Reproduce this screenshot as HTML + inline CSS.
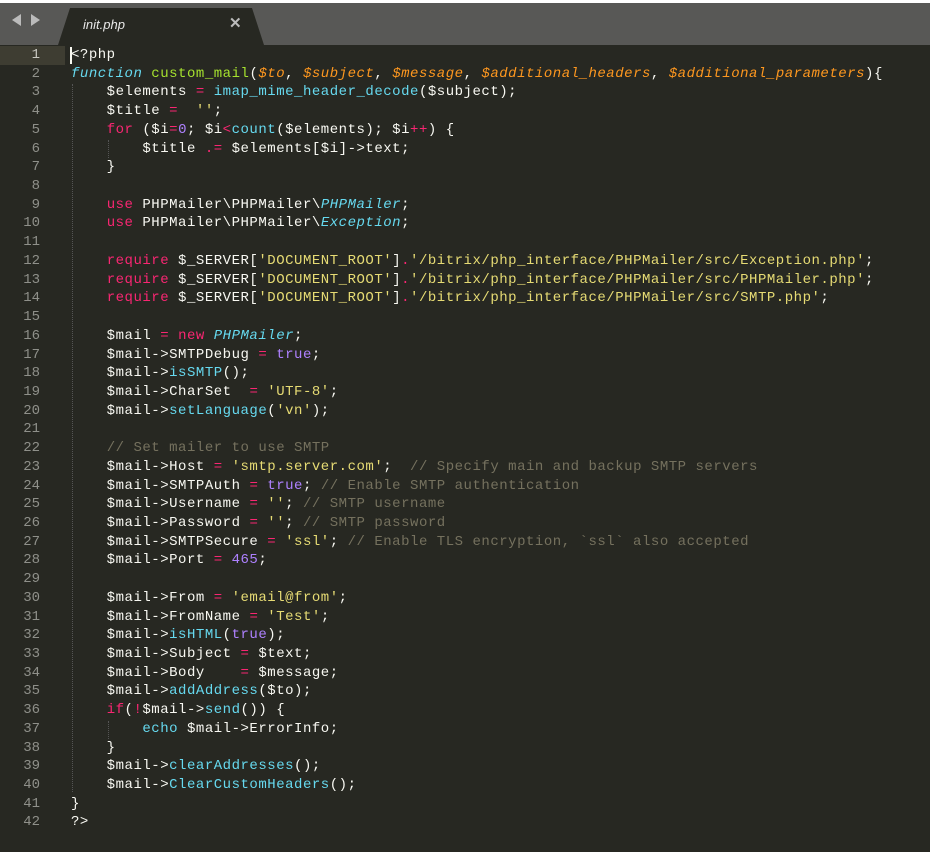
<!DOCTYPE html>
<html><head><meta charset="utf-8"><style>
html,body{margin:0;padding:0;width:930px;height:852px;overflow:hidden;background:#272822;}
.top{position:absolute;left:0;top:0;width:930px;height:3px;background:#fff;}
.bar{position:absolute;left:0;top:3px;width:930px;height:42px;background:#585856;}
.tab{position:absolute;left:58px;top:8px;width:206px;height:37px;background:#272822;clip-path:polygon(12px 0,194px 0,206px 37px,0 37px);}
.tabt{position:absolute;left:83px;top:17px;font:italic 13px "Liberation Sans",sans-serif;color:#e8e8e8;}
.x{position:absolute;left:229px;top:14px;font:bold 15px "Liberation Sans",sans-serif;color:#bbb;}
.arr{position:absolute;top:14px;width:0;height:0;border-top:6px solid transparent;border-bottom:6px solid transparent;}
.g{position:absolute;left:0;top:46px;width:64px;font:14px "Liberation Mono",monospace;color:#8f908a;text-align:right;}
.g div,.c div{height:18.73px;line-height:18.73px;}
.g div{padding-right:24px;}
.hl{position:absolute;left:0;top:46px;width:65px;height:19px;background:#3e3d32;}
.c{position:absolute;left:71px;top:46px;font:14px "Liberation Mono",monospace;letter-spacing:.52px;color:#f8f8f2;white-space:pre;}
.k{color:#f92672}.s{color:#66d9ef;font-style:italic}.b{color:#66d9ef}.f{color:#a6e22e}.p{color:#fd971f;font-style:italic}.y{color:#e6db74}.n{color:#ae81ff}.m{color:#75715e}
.cur{position:absolute;left:70px;top:47px;width:2px;height:17px;background:#f8f8f0;}
.ig{position:absolute;border-left:1px dotted #555;}
</style></head><body>
<div class="top"></div><div class="bar"></div>
<div class="arr" style="left:12px;border-right:9px solid #bbb"></div>
<div class="arr" style="left:31px;border-left:9px solid #bbb"></div>
<div class="tab"></div><div class="tabt">init.php</div><div class="x">✕</div>
<div class="hl"></div>
<div class="ig" style="left:72px;top:84px;height:708px"></div>
<div class="ig" style="left:108px;top:140px;height:18px"></div>
<div class="ig" style="left:108px;top:721px;height:18px"></div>
<div class="g"><div style="color:#c8c8c0">1</div><div>2</div><div>3</div><div>4</div><div>5</div><div>6</div><div>7</div><div>8</div><div>9</div><div>10</div><div>11</div><div>12</div><div>13</div><div>14</div><div>15</div><div>16</div><div>17</div><div>18</div><div>19</div><div>20</div><div>21</div><div>22</div><div>23</div><div>24</div><div>25</div><div>26</div><div>27</div><div>28</div><div>29</div><div>30</div><div>31</div><div>32</div><div>33</div><div>34</div><div>35</div><div>36</div><div>37</div><div>38</div><div>39</div><div>40</div><div>41</div><div>42</div></div>
<div class="c"><div>&lt;?php</div><div><span class="s">function</span> <span class="f">custom_mail</span>(<span class="p">$to</span>, <span class="p">$subject</span>, <span class="p">$message</span>, <span class="p">$additional_headers</span>, <span class="p">$additional_parameters</span>){</div><div>    $elements <span class="k">=</span> <span class="b">imap_mime_header_decode</span>($subject);</div><div>    $title <span class="k">=</span>  <span class="y">''</span>;</div><div>    <span class="k">for</span> ($i<span class="k">=</span><span class="n">0</span>; $i<span class="k">&lt;</span><span class="b">count</span>($elements); $i<span class="k">++</span>) {</div><div>        $title <span class="k">.=</span> $elements[$i]-&gt;text;</div><div>    }</div><div> </div><div>    <span class="k">use</span> PHPMailer\PHPMailer\<span class="s">PHPMailer</span>;</div><div>    <span class="k">use</span> PHPMailer\PHPMailer\<span class="s">Exception</span>;</div><div> </div><div>    <span class="k">require</span> $_SERVER[<span class="y">'DOCUMENT_ROOT'</span>]<span class="k">.</span><span class="y">'/bitrix/php_interface/PHPMailer/src/Exception.php'</span>;</div><div>    <span class="k">require</span> $_SERVER[<span class="y">'DOCUMENT_ROOT'</span>]<span class="k">.</span><span class="y">'/bitrix/php_interface/PHPMailer/src/PHPMailer.php'</span>;</div><div>    <span class="k">require</span> $_SERVER[<span class="y">'DOCUMENT_ROOT'</span>]<span class="k">.</span><span class="y">'/bitrix/php_interface/PHPMailer/src/SMTP.php'</span>;</div><div> </div><div>    $mail <span class="k">=</span> <span class="k">new</span> <span class="s">PHPMailer</span>;</div><div>    $mail-&gt;SMTPDebug <span class="k">=</span> <span class="n">true</span>;</div><div>    $mail-&gt;<span class="b">isSMTP</span>();</div><div>    $mail-&gt;CharSet  <span class="k">=</span> <span class="y">'UTF-8'</span>;</div><div>    $mail-&gt;<span class="b">setLanguage</span>(<span class="y">'vn'</span>);</div><div> </div><div>    <span class="m">// Set mailer to use SMTP</span></div><div>    $mail-&gt;Host <span class="k">=</span> <span class="y">'smtp.server.com'</span>;  <span class="m">// Specify main and backup SMTP servers</span></div><div>    $mail-&gt;SMTPAuth <span class="k">=</span> <span class="n">true</span>; <span class="m">// Enable SMTP authentication</span></div><div>    $mail-&gt;Username <span class="k">=</span> <span class="y">''</span>; <span class="m">// SMTP username</span></div><div>    $mail-&gt;Password <span class="k">=</span> <span class="y">''</span>; <span class="m">// SMTP password</span></div><div>    $mail-&gt;SMTPSecure <span class="k">=</span> <span class="y">'ssl'</span>; <span class="m">// Enable TLS encryption, `ssl` also accepted</span></div><div>    $mail-&gt;Port <span class="k">=</span> <span class="n">465</span>;</div><div> </div><div>    $mail-&gt;From <span class="k">=</span> <span class="y">'email@from'</span>;</div><div>    $mail-&gt;FromName <span class="k">=</span> <span class="y">'Test'</span>;</div><div>    $mail-&gt;<span class="b">isHTML</span>(<span class="n">true</span>);</div><div>    $mail-&gt;Subject <span class="k">=</span> $text;</div><div>    $mail-&gt;Body    <span class="k">=</span> $message;</div><div>    $mail-&gt;<span class="b">addAddress</span>($to);</div><div>    <span class="k">if</span>(<span class="k">!</span>$mail-&gt;<span class="b">send</span>()) {</div><div>        <span class="b">echo</span> $mail-&gt;ErrorInfo;</div><div>    }</div><div>    $mail-&gt;<span class="b">clearAddresses</span>();</div><div>    $mail-&gt;<span class="b">ClearCustomHeaders</span>();</div><div>}</div><div>?&gt;</div></div>
<div class="cur"></div>
</body></html>
